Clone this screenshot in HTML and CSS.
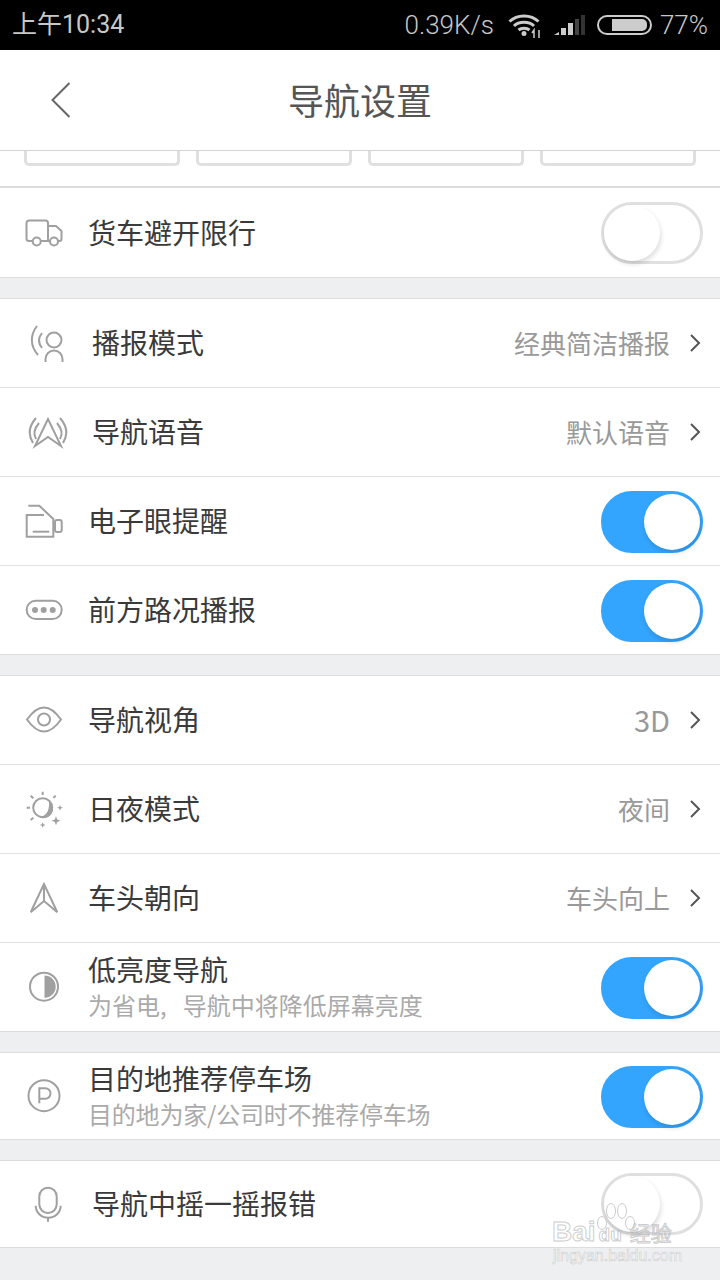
FILE: index.html
```html
<!DOCTYPE html>
<html lang="zh-CN">
<head>
    <meta charset="UTF-8">
    <meta name="viewport" content="width=device-width, initial-scale=1.0">
    <title>导航设置</title>
    <link rel="stylesheet" href="styles.css">
</head>
<body>
    <div class="status-bar">
        <span class="status-time">上午10:34</span>
        <div class="status-right">
            <span class="status-speed">0.39K/s</span>
            <svg class="wifi-icon" width="34" height="26" viewBox="0 0 34 26">
                <g fill="none" stroke="#ccc" stroke-width="3">
                    <path d="M1.5 9.5C9 2 23 2 30.5 9.5"/>
                    <path d="M6 14C11 9 21 9 26 14"/>
                    <path d="M10.5 18C13.5 15.5 18.500 15.500 21.500 18"/>
                </g>
                <circle cx="16" cy="21.500" r="2.500" fill="#ccc"/>
                <path d="M26 18v8M24 21l2-3v8M31 18v8" stroke="#ccc" stroke-width="1.500" fill="none"/>
            </svg>
            <svg class="signal-icon" width="32" height="24" viewBox="0 0 32 24">
                <path d="M0 22l5-3v3z" fill="#ccc"/>
                <rect x="7" y="15" width="5" height="7" fill="#ccc"/>
                <rect x="14" y="10" width="5" height="12" fill="#ccc"/>
                <rect x="21" y="6" width="4" height="16" fill="#444"/>
                <rect x="27" y="2" width="4" height="20" fill="#333"/>
            </svg>
            <div class="battery"><div class="battery-level"></div></div>
            <span class="status-percent">77%</span>
        </div>
    </div>

    <div class="header">
        <svg class="back-icon" width="22" height="38" viewBox="0 0 22 38">
            <path d="M19.500 2L2.500 19l17 17" fill="none" stroke="#666" stroke-width="2"/>
        </svg>
        <h1>导航设置</h1>
    </div>

    <div class="card-strip">
        <div class="strip-card"></div>
        <div class="strip-card"></div>
        <div class="strip-card"></div>
        <div class="strip-card"></div>
    </div>

    <div class="group group-first">
        <div class="row">
            <svg class="icon" viewBox="0 0 44 44">
                <path d="M8 30H5a2.500 2.500 0 0 1-2.500-2.500V12A2.500 2.500 0 0 1 5 9.500h16.500A2.500 2.500 0 0 1 24 12v18H17M24 15h8l5.500 5v8a2 2 0 0 1-2 2H34M24 30h2"/>
                <circle cx="12.700" cy="30.500" r="4"/>
                <circle cx="30" cy="30.500" r="4"/>
            </svg>
            <span class="label">货车避开限行</span>
            <div class="toggle"><div class="knob"></div></div>
        </div>
    </div>

    <div class="group">
        <div class="row row-inset">
            <svg class="icon" viewBox="0 0 44 44">
                <circle cx="30" cy="19" r="7.500"/>
                <path d="M21.500 41v-3a8.500 8.500 0 0 1 17 0v3"/>
                <path d="M13 5C6 14 6 25 14 34"/>
                <path d="M18 12C14 17 14 22 18 27"/>
            </svg>
            <span class="label">播报模式</span>
            <span class="value">经典简洁播报</span>
            <svg class="chevron" width="12" height="20" viewBox="0 0 12 20"><path d="M2 2l8 8-8 8"/></svg>
        </div>
        <div class="row row-inset">
            <svg class="icon" viewBox="0 0 44 44">
                <path d="M24 9L11 36l13-9 13 9z"/>
                <path d="M12 8C5 16 4 25 9 33"/>
                <path d="M15 13C10 19 9 24 12 29"/>
                <path d="M36 8C43 16 44 25 39 33"/>
                <path d="M33 13C38 19 39 24 36 29"/>
            </svg>
            <span class="label">导航语音</span>
            <span class="value">默认语音</span>
            <svg class="chevron" width="12" height="20" viewBox="0 0 12 20"><path d="M2 2l8 8-8 8"/></svg>
        </div>
        <div class="row">
            <svg class="icon" viewBox="0 0 44 44">
                <path d="M4.300 6.700h11l14 13.300v17.700H2.700V16H20"/>
                <path d="M8.700 32.700h16.600"/>
                <rect x="31" y="21" width="6.700" height="12" rx="2"/>
            </svg>
            <span class="label">电子眼提醒</span>
            <div class="toggle toggle-on"><div class="knob"></div></div>
        </div>
        <div class="row">
            <svg class="icon" viewBox="0 0 44 44">
                <rect x="2.700" y="12.700" width="35" height="18.300" rx="9"/>
                <circle class="solid" cx="11" cy="22" r="3"/>
                <circle class="solid" cx="19.700" cy="22" r="3"/>
                <circle class="solid" cx="28.700" cy="22" r="3"/>
            </svg>
            <span class="label">前方路况播报</span>
            <div class="toggle toggle-on"><div class="knob"></div></div>
        </div>
    </div>

    <div class="group">
        <div class="row">
            <svg class="icon" viewBox="0 0 44 44">
                <path d="M3 21.500C9 13 14 9.500 20 9.500S31 13 37 21.500C31 30 26 33.500 20 33.500S9 30 3 21.500Z"/>
                <circle cx="20" cy="21.500" r="6"/>
            </svg>
            <span class="label">导航视角</span>
            <span class="value value-latin">3D</span>
            <svg class="chevron" width="12" height="20" viewBox="0 0 12 20"><path d="M2 2l8 8-8 8"/></svg>
        </div>
        <div class="row">
            <svg class="icon" viewBox="0 0 44 44">
                <circle cx="18.700" cy="20.700" r="9.500"/>
                <path class="solid" d="M25 14a9.500 9.500 0 0 1-11 15.500c5 1 12-2 11-15.500z"/>
                <path d="M18.700 4.700V8M2.700 20.700H6M6.700 8.700l2.600 2.600M6.700 33l2.600-2.300M29.300 10.700l2.400-2"/>
                <path class="solid" d="M36 17.700l.8 2.200 2.200.8-2.200.8-.8 2.200-.8-2.200-2.200-.8 2.200-.8z"/>
                <path class="solid" d="M32 29.200l1.200 3.300 3.300 1.200-3.300 1.200-1.200 3.300-1.200-3.300-3.300-1.200 3.300-1.200z"/>
                <path class="solid" d="M18.700 35l.8 2.200 2.200.8-2.200.8-.8 2.200-.8-2.200-2.200-.8 2.200-.8z"/>
            </svg>
            <span class="label">日夜模式</span>
            <span class="value">夜间</span>
            <svg class="chevron" width="12" height="20" viewBox="0 0 12 20"><path d="M2 2l8 8-8 8"/></svg>
        </div>
        <div class="row">
            <svg class="icon" viewBox="0 0 44 44">
                <path d="M20 8L6.700 36.300 20 25l13.300 11.300zM20 8v17"/>
            </svg>
            <span class="label">车头朝向</span>
            <span class="value">车头向上</span>
            <svg class="chevron" width="12" height="20" viewBox="0 0 12 20"><path d="M2 2l8 8-8 8"/></svg>
        </div>
        <div class="row">
            <svg class="icon" viewBox="0 0 44 44">
                <circle cx="20" cy="21.700" r="14"/>
                <path class="solid" d="M20.500 10.500a11.200 11.200 0 0 1 0 22.400z"/>
            </svg>
            <div class="label-stack">
                <span class="label">低亮度导航</span>
                <span class="sub">为省电,&nbsp;&nbsp; 导航中将降低屏幕亮度</span>
            </div>
            <div class="toggle toggle-on"><div class="knob"></div></div>
        </div>
    </div>

    <div class="group">
        <div class="row row-short">
            <svg class="icon" viewBox="0 0 44 44">
                <circle cx="20" cy="21.700" r="15.500"/>
                <path d="M15.300 29.300v-15h6a5.200 5.200 0 0 1 0 10.400h-6"/>
            </svg>
            <div class="label-stack">
                <span class="label">目的地推荐停车场</span>
                <span class="sub sub-tight">目的地为家/公司时不推荐停车场</span>
            </div>
            <div class="toggle toggle-on"><div class="knob"></div></div>
        </div>
    </div>

    <div class="group">
        <div class="row row-short row-inset">
            <svg class="icon" viewBox="0 0 44 44">
                <rect x="15.300" y="5.700" width="17.400" height="25.300" rx="8.700"/>
                <path d="M11.700 23.700a12.500 12 0 0 0 25 0M24 35.700v4"/>
            </svg>
            <span class="label">导航中摇一摇报错</span>
            <div class="toggle"><div class="knob"></div></div>
        </div>
    </div>

    <div class="watermark">
        <svg class="paw" width="40" height="40" viewBox="0 0 40 40">
            <ellipse cx="6" cy="21" rx="4.500" ry="6.500"/>
            <ellipse cx="15" cy="9" rx="4.500" ry="7.500"/>
            <ellipse cx="26" cy="9" rx="4.500" ry="7.500"/>
            <ellipse cx="34" cy="21" rx="4.500" ry="6.500"/>
        </svg>
        <div class="wm-brand">Bai<span class="wm-du">du</span><span class="wm-cn">经验</span></div>
        <div class="wm-url">jingyan.baidu.com</div>
    </div>
</body>
</html>
```

FILE: styles.css
```css
html, body {
    height: 100%;
}
body {
    font-family: "Noto Sans CJK SC", "Noto Sans", sans-serif;
    margin: 0;
    padding: 0;
    width: 720px;
    height: 1280px;
    overflow: hidden;
    background-color: #eeeff1;
    color: #333;
    position: relative;
}
.status-bar {
    height: 50px;
    background-color: #000;
    color: #c8c8c8;
    display: flex;
    justify-content: space-between;
    align-items: center;
    padding: 0 12px;
    box-sizing: border-box;
    font-family: Roboto, "Noto Sans CJK SC", sans-serif;
}
.status-time {
    font-size: 25px;
    line-height: 50px;
    font-weight: 400;
}
.status-right {
    display: flex;
    align-items: center;
}
.status-speed {
    font-size: 26px;
    font-weight: 300;
    margin-right: 14px;
}
.wifi-icon {
    margin-right: 12px;
}
.signal-icon {
    margin-right: 11px;
}
.battery {
    width: 55px;
    height: 20px;
    box-sizing: border-box;
    border: 2px solid #ccc;
    border-radius: 10px;
    padding: 2px 3px 2px 13px;
    margin-right: 8px;
}
.battery-level {
    height: 100%;
    width: 100%;
    background-color: #ccc;
    border-radius: 0 5px 5px 0;
}
.status-percent {
    font-size: 26px;
    font-weight: 300;
}
.header {
    height: 101px;
    box-sizing: border-box;
    background-color: #fff;
    border-bottom: 1px solid #d4d4d4;
    position: relative;
    display: flex;
    align-items: center;
    justify-content: center;
    padding-bottom: 3px;
}
.header h1 {
    margin: 0;
    font-size: 36px;
    font-weight: 400;
    color: #555;
}
.back-icon {
    position: absolute;
    left: 50px;
    top: 31px;
}
.card-strip {
    height: 35px;
    background-color: #fff;
    display: grid;
    grid-template-columns: repeat(4, 156px);
    gap: 16px;
    padding: 0 24px;
    box-sizing: border-box;
    align-items: start;
}
.strip-card {
    height: 15px;
    box-sizing: border-box;
    border: 3px solid #e0e0e0;
    border-top: none;
    border-radius: 0 0 5px 5px;
}
.group {
    margin-top: 20px;
    background-color: #fff;
    border-top: 1px solid #ddd;
    border-bottom: 1px solid #ddd;
}
.group-first {
    margin-top: 0;
    border-top: 2px solid #ddd;
}
.row {
    height: 88px;
    display: flex;
    align-items: center;
    padding: 0 17px 0 24px;
    border-bottom: 1px solid #e2e2e2;
}
.row:last-child {
    border-bottom: none;
}
.group-first .row {
    height: 89px;
}
.row-short {
    height: 86px;
}
.icon {
    width: 44px;
    height: 44px;
    flex: none;
    margin-right: 20px;
    fill: none;
    stroke: #a0a0a0;
    stroke-width: 2;
}
.icon .solid {
    fill: #a0a0a0;
    stroke: none;
}
.row-inset .icon {
    margin-right: 24px;
}
.label {
    font-size: 28px;
    line-height: 36px;
    color: #3a3a3a;
}
.row > .label {
    padding-bottom: 2px;
}
.label-stack {
    display: flex;
    flex-direction: column;
    padding-bottom: 2px;
}
.sub {
    font-size: 24px;
    line-height: 32px;
    margin-top: 2px;
    color: #aaa;
}
.sub-tight {
    letter-spacing: -0.2px;
}
.value {
    margin-left: auto;
    font-size: 26px;
    padding-bottom: 2px;
    color: #999;
}
.value-latin {
    font-size: 29px;
    line-height: 36px;
}
.chevron {
    flex: none;
    margin-left: 19px;
    margin-right: 2px;
    fill: none;
    stroke: #555;
    stroke-width: 2;
}
.toggle {
    margin-left: auto;
    width: 102px;
    height: 62px;
    box-sizing: border-box;
    border: 3px solid #e0e0e0;
    border-radius: 31px;
    background-color: #fff;
    flex: none;
    display: flex;
    align-items: center;
}
.knob {
    width: 56px;
    height: 56px;
    border-radius: 50%;
    background-color: #fff;
    box-shadow: 1px 3px 5px rgba(0, 0, 0, 0.14);
}
.toggle-on {
    background-color: #33a5ff;
    border-color: #33a5ff;
    justify-content: flex-end;
    margin-top: 2px;
}
.watermark {
    position: absolute;
    left: 552px;
    top: 1202px;
    width: 130px;
    height: 64px;
    color: rgba(255, 255, 255, 0.6);
    font-family: "Liberation Sans", "Noto Sans CJK SC", sans-serif;
}
.paw {
    position: absolute;
    left: 44px;
    top: 0;
    fill: rgba(255, 255, 255, 0.5);
    stroke: #ccc;
    stroke-width: 1;
}
.wm-brand {
    position: absolute;
    left: 0;
    top: 14px;
    font-size: 28px;
    font-weight: 700;
    line-height: 32px;
    white-space: nowrap;
    -webkit-text-stroke: 1px rgba(170, 170, 170, 0.6);
}
.wm-du {
    font-size: 19px;
    margin-left: 3px;
}
.wm-cn {
    font-size: 21px;
    font-weight: 400;
    font-family: "Noto Sans CJK SC", sans-serif;
    margin-left: 8px;
}
.wm-url {
    position: absolute;
    left: 1px;
    top: 45px;
    font-size: 16px;
    line-height: 18px;
    white-space: nowrap;
    -webkit-text-stroke: 0.5px rgba(170, 170, 170, 0.6);
}
```
